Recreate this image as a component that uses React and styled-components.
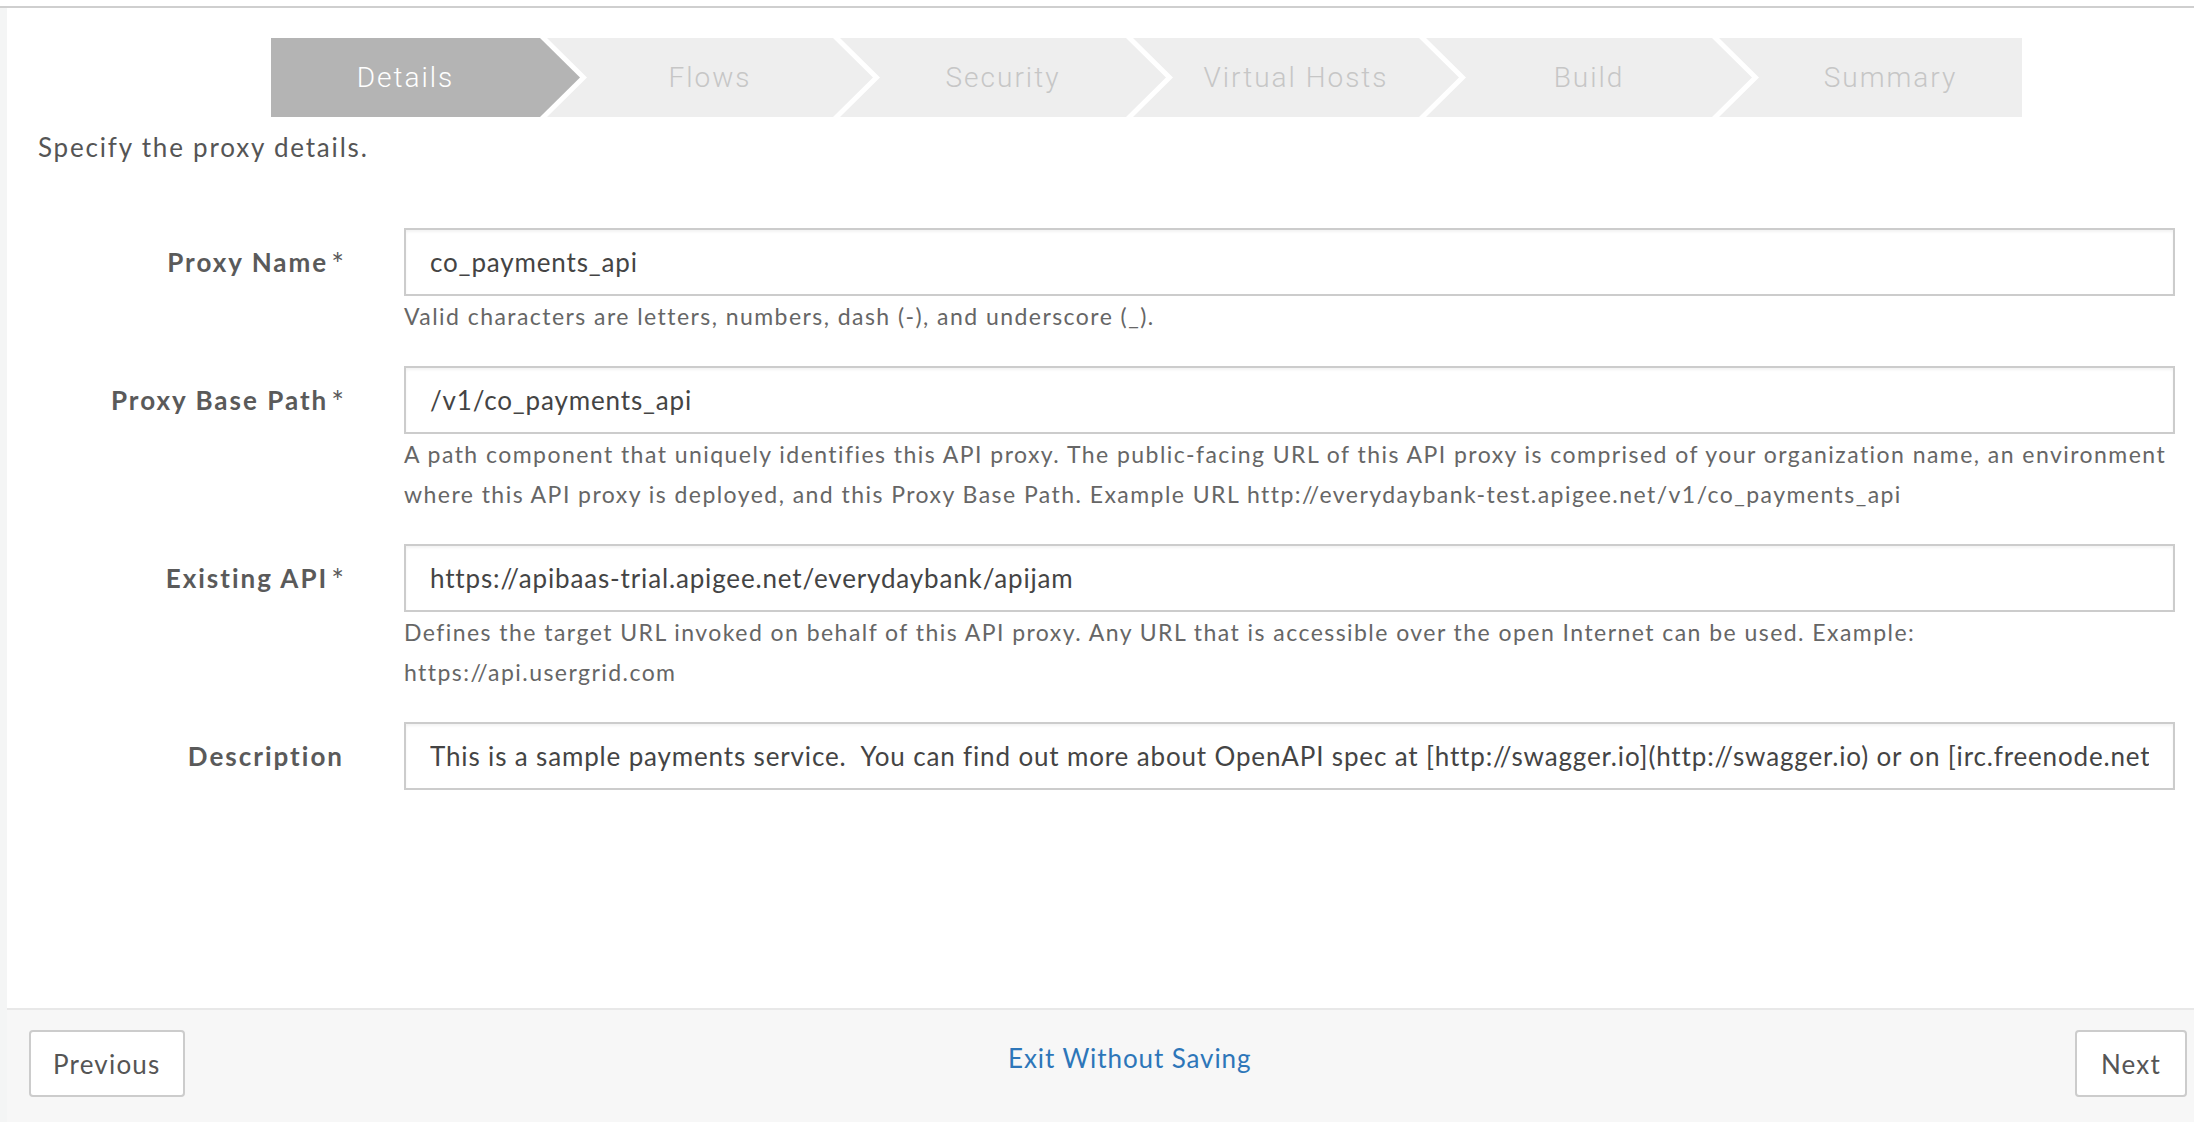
import React from "react";
import styled, { createGlobalStyle } from "styled-components";

const GlobalStyle = createGlobalStyle`
  html, body {
    margin: 0;
    padding: 0;
    background: #ffffff;
  }
  body {
    font-family: Lato, "Open Sans", sans-serif;
    color: #555555;
  }
  * {
    box-sizing: border-box;
  }
`;

const Page = styled.div`
  height: 100vh;
  padding-top: 6px;
  display: flex;
  flex-direction: column;
`;

const Frame = styled.div`
  flex: 1;
  display: flex;
  border-top: 2px solid #cfcfcf;
  min-height: 0;
`;

const Strip = styled.div`
  flex: 0 0 7px;
  background: #f4f5f5;
`;

const Main = styled.div`
  flex: 1;
  display: flex;
  flex-direction: column;
  min-width: 0;
`;

const Content = styled.div`
  flex: 1;
  padding: 30px 19px 0 0;
`;

const Stepper = styled.div`
  display: flex;
  width: 1751px;
  height: 79px;
  margin-left: 264px;
`;

// chevron depth 40px, white gap 7px between steps
const Step = styled.div`
  flex: ${(p) => (p.$first ? "0 0 309px" : p.$last ? "0 0 303px" : "1 1 0")};
  display: flex;
  align-items: center;
  justify-content: center;
  margin-left: ${(p) => (p.$first ? "0" : "-33px")};
  padding: ${(p) => (p.$first ? "0 40px 0 0" : p.$last ? "0 0 0 40px" : "0 40px")};
  background: ${(p) => (p.$active ? "#b4b4b4" : "#eeeeee")};
  color: ${(p) => (p.$active ? "#ffffff" : "#c6c6c6")};
  font-family: Roboto, "Liberation Sans", sans-serif;
  font-weight: 300;
  font-size: 28px;
  letter-spacing: 2px;
  white-space: nowrap;
  clip-path: ${(p) =>
    p.$first
      ? "polygon(0 0, calc(100% - 40px) 0, 100% 50%, calc(100% - 40px) 100%, 0 100%)"
      : p.$last
      ? "polygon(0 0, 100% 0, 100% 100%, 0 100%, 40px 50%)"
      : "polygon(0 0, calc(100% - 40px) 0, 100% 50%, calc(100% - 40px) 100%, 0 100%, 40px 50%)"};
`;

const Intro = styled.p`
  margin: 10px 0 0 31px;
  font-size: 26px;
  line-height: 40px;
  letter-spacing: 1.8px;
  color: #555555;
`;

const Form = styled.div`
  margin-top: 61px;
  display: flex;
  flex-direction: column;
  gap: 30px;
`;

const Row = styled.div`
  display: grid;
  grid-template-columns: 337px 1fr;
  column-gap: 60px;
`;

const LabelCell = styled.div`
  height: 68px;
  display: flex;
  align-items: center;
  justify-content: flex-end;
`;

const Label = styled.label`
  font-weight: 700;
  font-size: 26px;
  letter-spacing: 2px;
  color: #5a5a5a;
`;

const Required = styled.span`
  margin-left: 3px;
  font-size: 30px;
  font-weight: 400;
  line-height: 0;
  letter-spacing: 0;
  vertical-align: -3px;
`;

const Control = styled.div`
  min-width: 0;
`;

const TextInput = styled.input`
  display: block;
  width: 100%;
  height: 68px;
  padding: 0 24px;
  border: 2px solid #cccccc;
  border-radius: 0;
  box-shadow: inset 0 2px 3px rgba(0, 0, 0, 0.05);
  background: #ffffff;
  font-family: Lato, "Open Sans", sans-serif;
  font-size: 26px;
  letter-spacing: 0.85px;
  color: #444444;
  outline: none;
`;

const Help = styled.div`
  font-size: 23px;
  line-height: 40px;
  letter-spacing: 1.45px;
  color: #666666;
  white-space: nowrap;
`;

const Footer = styled.div`
  flex: 0 0 114px;
  display: flex;
  justify-content: space-between;
  align-items: flex-start;
  padding: 20px 7px 0 22px;
  border-top: 2px solid #e8e8e8;
  background: #f7f7f7;
`;

const Button = styled.button`
  height: 67px;
  padding: 0 ${(p) => p.$pad || "22px"};
  border: 2px solid #cccccc;
  border-radius: 4px;
  background: #ffffff;
  font-family: Lato, "Open Sans", sans-serif;
  font-size: 26px;
  letter-spacing: 1.2px;
  color: #555555;
  cursor: pointer;
`;

const ExitLink = styled.a`
  margin-top: 8px;
  font-size: 26px;
  line-height: 40px;
  letter-spacing: 0.9px;
  color: #2d76b9;
  text-decoration: none;
  cursor: pointer;
`;

const steps = ["Details", "Flows", "Security", "Virtual Hosts", "Build", "Summary"];

const fields = [
  {
    label: "Proxy Name",
    required: true,
    value: "co_payments_api",
    help: ["Valid characters are letters, numbers, dash (-), and underscore (_)."],
  },
  {
    label: "Proxy Base Path",
    required: true,
    value: "/v1/co_payments_api",
    help: [
      "A path component that uniquely identifies this API proxy. The public-facing URL of this API proxy is comprised of your organization name, an environment",
      "where this API proxy is deployed, and this Proxy Base Path. Example URL http://everydaybank-test.apigee.net/v1/co_payments_api",
    ],
  },
  {
    label: "Existing API",
    required: true,
    value: "https://apibaas-trial.apigee.net/everydaybank/apijam",
    help: [
      "Defines the target URL invoked on behalf of this API proxy. Any URL that is accessible over the open Internet can be used. Example:",
      "https://api.usergrid.com",
    ],
  },
  {
    label: "Description",
    required: false,
    value:
      "This is a sample payments service.  You can find out more about OpenAPI spec at [http://swagger.io](http://swagger.io) or on [irc.freenode.net, #swagger](http://swagger.io/irc/).",
    help: [],
  },
];

const Field = ({ field }) => (
  <Row>
    <LabelCell>
      <Label>
        {field.label}
        {field.required && <Required>*</Required>}
      </Label>
    </LabelCell>
    <Control>
      <TextInput type="text" value={field.value} readOnly />
      {field.help.length > 0 && (
        <Help>
          {field.help.map((line) => (
            <div key={line}>{line}</div>
          ))}
        </Help>
      )}
    </Control>
  </Row>
);

export default function App() {
  return (
    <>
      <GlobalStyle />
      <Page>
        <Frame>
          <Strip />
          <Main>
            <Content>
              <Stepper>
                {steps.map((s, i) => (
                  <Step
                    key={s}
                    $first={i === 0}
                    $last={i === steps.length - 1}
                    $active={i === 0}
                  >
                    {s}
                  </Step>
                ))}
              </Stepper>
              <Intro>Specify the proxy details.</Intro>
              <Form>
                {fields.map((f) => (
                  <Field key={f.label} field={f} />
                ))}
              </Form>
            </Content>
            <Footer>
              <Button>Previous</Button>
              <ExitLink>Exit Without Saving</ExitLink>
              <Button $pad="24px">Next</Button>
            </Footer>
          </Main>
        </Frame>
      </Page>
    </>
  );
}
